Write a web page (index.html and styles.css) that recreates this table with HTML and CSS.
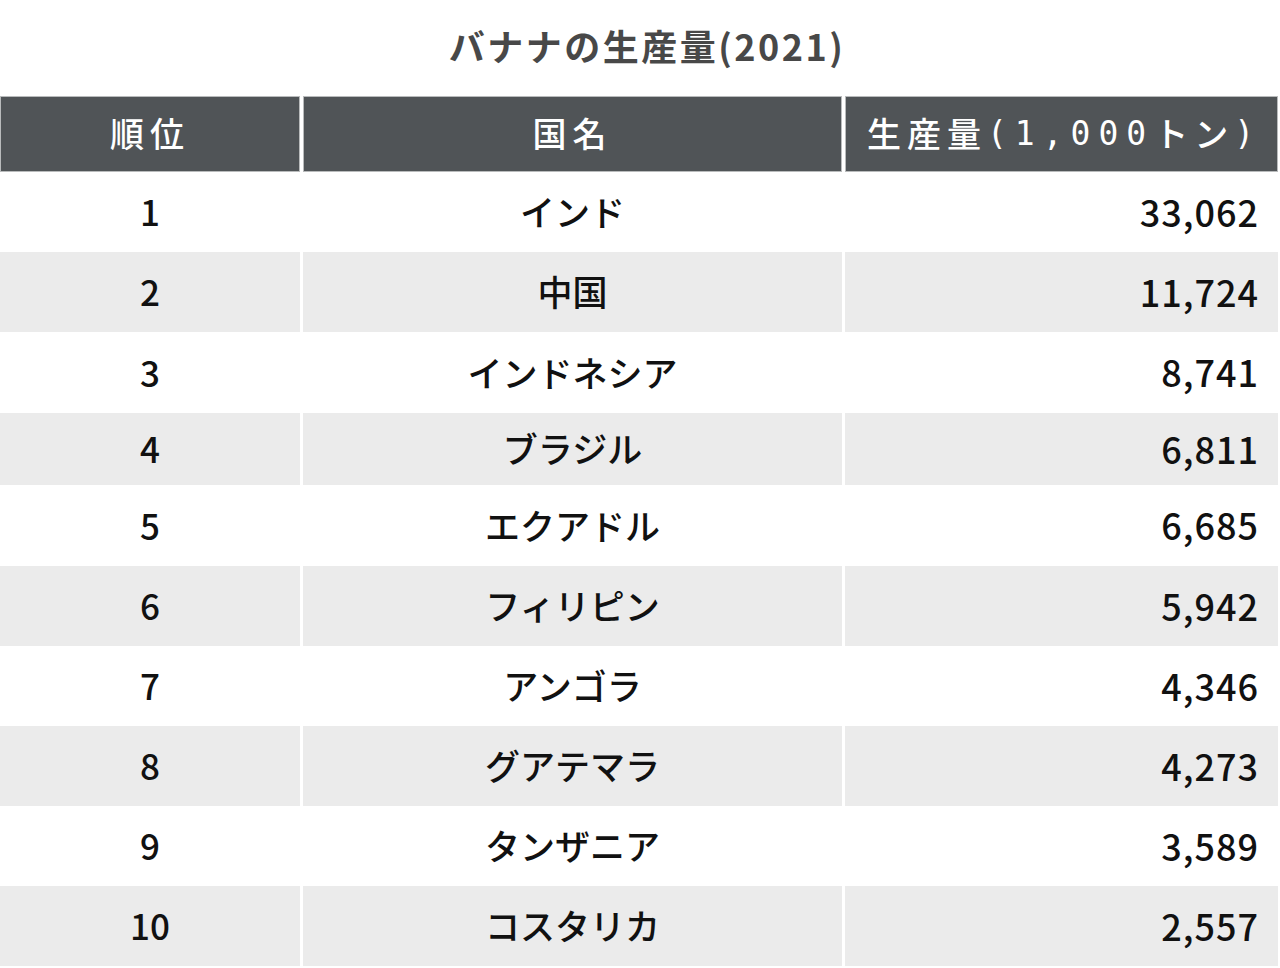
FILE: index.html
```html
<!DOCTYPE html>
<html lang="ja">
<head>
<meta charset="utf-8">
<title>バナナの生産量(2021)</title>
<link rel="stylesheet" href="styles.css">
</head>
<body>
<div class="page">
  <h1 class="title">バナナの生産量(2021)</h1>
  <div class="table">
    <div class="row head">
      <div class="cell c1">順位</div>
      <div class="cell c2">国名</div>
      <div class="cell c3"><span class="hj">生産量</span><span class="hm">(1,000</span><span class="hj">トン</span><span class="hm">)</span></div>
    </div>
    <div class="row"><div class="cell c1">1</div><div class="cell c2">インド</div><div class="cell c3 num">33,062</div></div>
    <div class="row alt"><div class="cell c1">2</div><div class="cell c2">中国</div><div class="cell c3 num">11,724</div></div>
    <div class="row tall"><div class="cell c1">3</div><div class="cell c2">インドネシア</div><div class="cell c3 num">8,741</div></div>
    <div class="row alt short"><div class="cell c1">4</div><div class="cell c2">ブラジル</div><div class="cell c3 num">6,811</div></div>
    <div class="row tall"><div class="cell c1">5</div><div class="cell c2">エクアドル</div><div class="cell c3 num">6,685</div></div>
    <div class="row alt"><div class="cell c1">6</div><div class="cell c2">フィリピン</div><div class="cell c3 num">5,942</div></div>
    <div class="row"><div class="cell c1">7</div><div class="cell c2">アンゴラ</div><div class="cell c3 num">4,346</div></div>
    <div class="row alt"><div class="cell c1">8</div><div class="cell c2">グアテマラ</div><div class="cell c3 num">4,273</div></div>
    <div class="row"><div class="cell c1">9</div><div class="cell c2">タンザニア</div><div class="cell c3 num">3,589</div></div>
    <div class="row alt"><div class="cell c1">10</div><div class="cell c2">コスタリカ</div><div class="cell c3 num">2,557</div></div>
  </div>
</div>
</body>
</html>
```
FILE: styles.css
```css
* { box-sizing: border-box; }
html, body { margin: 0; padding: 0; background: #ffffff; }
body {
  font-family: "Noto Sans CJK JP", "Noto Sans", sans-serif;
  color: #111111;
}
.page { width: 1280px; }
.title {
  margin: 0;
  height: 96px;
  display: flex;
  align-items: center;
  justify-content: center;
  padding-bottom: 6px;
  font-size: 36px;
  font-weight: 700;
  color: #484848;
  letter-spacing: 2.5px;
  padding-left: 14px;
}
.table {
  width: 1278px;
  display: flex;
  flex-direction: column;
}
.row {
  display: grid;
  grid-template-columns: 300px 539px 433px;
  column-gap: 3px;
  height: 80px;
}
.row.tall { height: 81px; }
.row.short { height: 72px; }
.row.head { height: 76px; }
.cell {
  display: flex;
  align-items: center;
  justify-content: center;
  font-size: 35px;
  font-weight: 500;
  line-height: 1;
  padding-bottom: 3px;
}
.alt .cell { background: #ebebeb; }
.num {
  justify-content: flex-end;
  padding-right: 19px;
  font-size: 36px;
  letter-spacing: 1px;
}
.head .cell {
  background: #505457;
  border: 1px solid #b9bbbc;
  color: #ffffff;
  font-size: 34px;
  font-weight: 500;
  letter-spacing: 6px;
  padding-bottom: 2px;
}
.head .c3 { justify-content: flex-start; padding-left: 21px; }
.hm {
  font-family: "DejaVu Sans Mono", "Liberation Mono", monospace;
  font-size: 33px;
  font-weight: 400;
  letter-spacing: 8px;
}
```
